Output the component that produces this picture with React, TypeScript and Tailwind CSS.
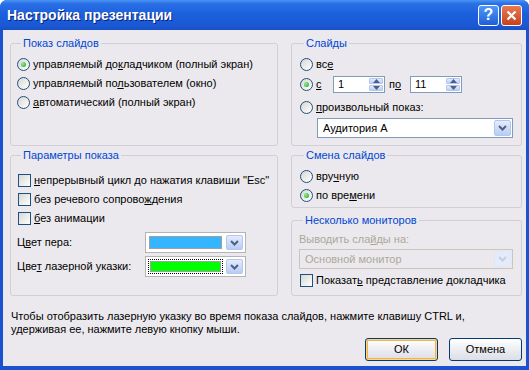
import React from 'react';

const Chevron = ({ color = '#4d6185' }: { color?: string }) => (
  <svg width="9" height="6" viewBox="0 0 9 6">
    <path d="M1 1 L4.5 4.5 L8 1" fill="none" stroke={color} strokeWidth="2" />
  </svg>
);

const DropBtn = ({ disabled }: { disabled?: boolean }) => (
  <span
    className={
      disabled
        ? 'flex h-full w-[17px] shrink-0 items-center justify-center rounded-[2px] border border-[#dfe7f6] bg-[#e4ecfb]'
        : 'flex h-full w-[17px] shrink-0 items-center justify-center rounded-[2px] border border-[#b2c6f0] bg-gradient-to-b from-[#e4ecfd] to-[#b9ccf5]'
    }
  >
    <Chevron color={disabled ? '#c5cfe2' : '#4d6185'} />
  </span>
);

const Radio = ({ checked }: { checked?: boolean }) => (
  <span className="flex h-[13px] w-[13px] shrink-0 items-center justify-center rounded-full border border-[#1c5180] bg-gradient-to-br from-[#d8d7d2] to-white">
    {checked && (
      <span className="h-[5px] w-[5px] rounded-full bg-[radial-gradient(circle_at_35%_35%,#8ff08f,#1fa01f)]" />
    )}
  </span>
);

const Check = () => (
  <span className="ml-[1px] block h-[13px] w-[13px] shrink-0 border border-[#1c5180] bg-gradient-to-br from-[#d8d7d2] to-white" />
);

// spin arrows
const SpinBtn = ({ up }: { up?: boolean }) => (
  <span className="flex flex-1 items-center justify-center rounded-[1px] border border-[#b2c6f0] bg-gradient-to-b from-[#e6eefd] to-[#bccef5]">
    <svg width="7" height="4" viewBox="0 0 7 4">
      <path d={up ? 'M0 4 L3.5 0 L7 4 Z' : 'M0 0 L3.5 4 L7 0 Z'} fill="#4d6185" />
    </svg>
  </span>
);

const Spinner = ({ value }: { value: string }) => (
  <div className="flex h-[17px] w-[52px] border border-[#7f9db9] bg-white">
    <span className="flex-1 pl-[4px] leading-[15px]">{value}</span>
    <span className="flex w-[16px] flex-col gap-[1px] p-[1px]">
      <SpinBtn up />
      <SpinBtn />
    </span>
  </div>
);

const ColorCombo = ({ color, focused }: { color: string; focused?: boolean }) => (
  <div className="flex h-[21px] w-[101px] gap-[3px] border border-[#b4b4b4] bg-white p-[2px]">
    <span className={focused ? 'flex flex-1 border border-dotted border-black p-[1px]' : 'flex flex-1 p-[1px]'}>
      <span className="flex-1 border border-[#a0a0a0]" style={{ backgroundColor: color }} />
    </span>
    <DropBtn />
  </div>
);

const Row = ({ children, className = '' }: { children: React.ReactNode; className?: string }) => (
  <div className={`flex h-[19px] items-center gap-[3px] ${className}`}>{children}</div>
);

const Group = ({ title, className, children }: { title: string; className: string; children: React.ReactNode }) => (
  <fieldset className={`rounded-[3px] border border-[#d0ced6] ${className}`}>
    <legend className="ml-[4px] px-[2px] leading-[13px] text-[#0046d5]">{title}</legend>
    {children}
  </fieldset>
);

export default function App() {
  return (
    <div className="flex h-[370px] w-[529px] flex-col overflow-hidden rounded-t-[7px] bg-[#1a52d0] font-['Liberation_Sans',Arial,sans-serif] text-[11px] text-black">
      {/* Title bar */}
      <div className="flex h-[30px] shrink-0 items-center bg-[linear-gradient(to_bottom,#4b96f6_0%,#2a70e6_12%,#1d60dd_45%,#1a58d4_85%,#1850c6_100%)] pl-[7px] pr-[7px]">
        <span className="text-[14px] font-bold text-white [text-shadow:1px_1px_0_#0a1f7a]">Настройка презентации</span>
        <div className="ml-auto flex gap-[2px]">
          <button className="flex h-[21px] w-[21px] items-center justify-center rounded-[3px] border border-white bg-gradient-to-b from-[#4f97f8] to-[#1f5fd9] text-[16px] font-bold leading-none text-white">
            ?
          </button>
          <button className="flex h-[21px] w-[21px] items-center justify-center rounded-[3px] border border-white bg-gradient-to-b from-[#e9794f] to-[#c8401b]">
            <svg width="11" height="11" viewBox="0 0 11 11">
              <path d="M1.5 1.5 L9.5 9.5 M9.5 1.5 L1.5 9.5" stroke="white" strokeWidth="2.2" />
            </svg>
          </button>
        </div>
      </div>

      {/* Client area */}
      <div className="mx-[3px] mb-[4px] flex flex-1 flex-col bg-[#ebe9ed] pl-[7px] pr-[4px] pt-[7px]">
        <div className="flex gap-[13px]">
          <Group title="Показ слайдов" className="h-[109px] w-[268px] pl-[6px] pt-[5px]">
            <Row>
              <Radio checked />
              <span>управляемый до<u>к</u>ладчиком (полный экран)</span>
            </Row>
            <Row>
              <Radio />
              <span>управляемый по<u>л</u>ьзователем (окно)</span>
            </Row>
            <Row>
              <Radio />
              <span><u>а</u>втоматический (полный экран)</span>
            </Row>
          </Group>

          <Group title="Слайды" className="h-[109px] w-[231px] pl-[8px] pt-[5px]">
            <Row>
              <Radio />
              <span>вс<u>е</u></span>
            </Row>
            <div className="mt-[1px] flex h-[19px] items-center">
              <span className="flex w-[33px] items-center gap-[3px]">
                <Radio checked />
                <u>с</u>
              </span>
              <Spinner value="1" />
              <span className="w-[25px] pl-[4px]">п<u>о</u></span>
              <Spinner value="11" />
            </div>
            <Row className="mt-[4px]">
              <Radio />
              <span><u>п</u>роизвольный показ:</span>
            </Row>
            <div className="ml-[17px] mt-[1px] flex h-[20px] w-[196px] border border-[#7f9db9] bg-white p-[1px]">
              <span className="flex-1 pl-[4px] leading-[16px]">Аудитория А</span>
              <DropBtn />
            </div>
          </Group>
        </div>

        <div className="mt-[3px] flex gap-[13px]">
          <Group title="Параметры показа" className="h-[147px] w-[268px] pl-[6px] pt-[9px]">
            <Row>
              <Check />
              <span><u>н</u>епрерывный цикл до нажатия клавиши "Esc"</span>
            </Row>
            <Row>
              <Check />
              <span>без речевого сопрово<u>ж</u>дения</span>
            </Row>
            <Row>
              <Check />
              <span><u>б</u>ез анимации</span>
            </Row>
            <div className="mt-[4px] flex h-[21px] items-center">
              <span className="w-[128px]">Ц<u>в</u>ет пера:</span>
              <ColorCombo color="#33b5ff" />
            </div>
            <div className="mt-[3px] flex h-[21px] items-center">
              <span className="w-[128px]">Цве<u>т</u> лазерной указки:</span>
              <ColorCombo color="#00ff00" focused />
            </div>
          </Group>

          <div className="flex w-[231px] flex-col gap-[6px]">
            <Group title="Смена слайдов" className="h-[59px] pl-[8px] pt-[5px]">
              <Row>
                <Radio />
                <span>вру<u>ч</u>ную</span>
              </Row>
              <Row>
                <Radio checked />
                <span>по вре<u>м</u>ени</span>
              </Row>
            </Group>
            <Group title="Несколько мониторов" className="h-[82px] pl-[7px] pt-[4px]">
              <div className="flex h-[17px] items-center text-[#aca899]">Выводить сла<u>й</u>ды на:</div>
              <div className="mt-[1px] flex h-[20px] w-[214px] border border-[#c9c7ba] p-[1px] text-[#aca899]">
                <span className="flex-1 pl-[4px] leading-[16px]">Основной монитор</span>
                <DropBtn disabled />
              </div>
              <Row className="mt-[2px]">
                <Check />
                <span>Показат<u>ь</u> представление докладчика</span>
              </Row>
            </Group>
          </div>
        </div>

        <p className="ml-[1px] mt-[14px] leading-[13px]">
          Чтобы отобразить лазерную указку во время показа слайдов, нажмите клавишу CTRL и,
          <br />
          удерживая ее, нажмите левую кнопку мыши.
        </p>

        <div className="mt-[2px] flex justify-end gap-[11px]">
          <button className="h-[23px] w-[73px] rounded-[3px] border border-[#003c74] bg-gradient-to-b from-white to-[#dcdde6] shadow-[inset_0_0_0_1px_#fcd58a,inset_0_0_0_2px_#f4b24c]">
            ОК
          </button>
          <button className="h-[23px] w-[73px] rounded-[3px] border border-[#003c74] bg-gradient-to-b from-white to-[#dcdde6]">
            Отмена
          </button>
        </div>
      </div>
    </div>
  );
}
